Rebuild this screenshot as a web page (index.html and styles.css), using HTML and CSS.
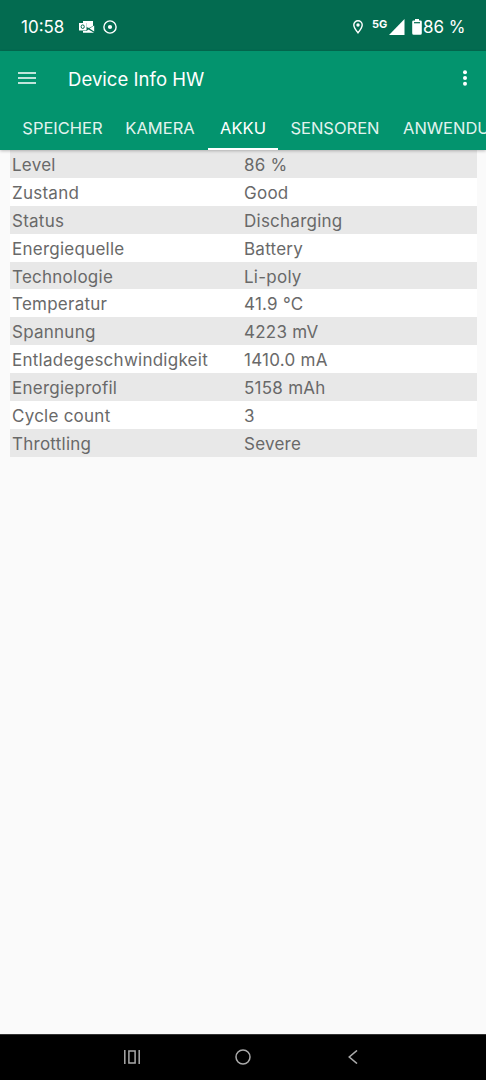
FILE: index.html
```
<!DOCTYPE html>
<html lang="de">
<head>
  <meta charset="UTF-8">
  <meta name="viewport" content="width=device-width, initial-scale=1.0">
  <title>Device Info HW</title>
  <link rel="stylesheet" href="styles.css">
</head>
<body>
  <div class="status-bar">
    <span class="clock">10:58</span>
    <svg class="icon-mail" width="16" height="14" viewBox="0 0 16 14">
      <path d="M4 1h10v5l-4 2-2.500-1V3H4z" fill="#fff"/>
      <path d="M15.200 5.500v6L10.500 8.500z" fill="#fff"/>
      <path d="M4 11h3.500l2-1.500 5.500 3.300H4z" fill="#fff"/>
      <rect x="0" y="3" width="7.500" height="7.500" fill="#fff"/>
      <ellipse cx="3.700" cy="6.700" rx="1.600" ry="1.800" fill="none" stroke="#036b50" stroke-width="1"/>
    </svg>
    <svg class="icon-target" width="14" height="14" viewBox="0 0 14 14">
      <circle cx="7" cy="7" r="6.100" fill="none" stroke="#fff" stroke-width="1.400"/>
      <circle cx="7" cy="7" r="2.100" fill="#fff"/>
    </svg>
    <svg class="icon-pin" width="10" height="14" viewBox="0 0 10 14">
      <path d="M5 12.800C3 10.200.8 7.400.8 4.900a4.200 4.200 0 0 1 8.400 0C9.200 7.400 7 10.200 5 12.800z" fill="none" stroke="#fff" stroke-width="1.400"/>
      <circle cx="5" cy="5" r="1.700" fill="#fff"/>
    </svg>
    <span class="network">5G</span>
    <svg class="icon-signal" width="16" height="16" viewBox="0 0 16 16"><path d="M0 16L15.500 0v16z" fill="#fff"/></svg>
    <svg class="icon-battery" width="10" height="16" viewBox="0 0 10 16">
      <path d="M3 0h4v1.500h1.500a1.300 1.300 0 0 1 1.300 1.300v11.500a1.500 1.500 0 0 1-1.500 1.500H1.700a1.500 1.500 0 0 1-1.500-1.500V2.800a1.300 1.300 0 0 1 1.300-1.300H3z" fill="#fff"/>
      <path d="M2 3.700h6" stroke="#036b50" stroke-width="1.200"/>
    </svg>
    <span class="percent">86 %</span>
  </div>

  <header class="app-header">
    <div class="toolbar">
      <svg class="menu" width="18" height="14" viewBox="0 0 18 14"><path d="M0 2h18M0 7h18M0 12h18" stroke="#fff" stroke-width="1.700"/></svg>
      <h1>Device Info HW</h1>
      <svg class="more" width="6" height="18" viewBox="0 0 6 18">
        <circle cx="3" cy="3.200" r="2" fill="#fff"/>
        <circle cx="3" cy="9" r="2" fill="#fff"/>
        <circle cx="3" cy="14.800" r="2" fill="#fff"/>
      </svg>
    </div>
    <nav class="tabs">
      <a class="tab tab-storage">SPEICHER</a>
      <a class="tab tab-camera">KAMERA</a>
      <a class="tab tab-battery active">AKKU</a>
      <a class="tab tab-sensors">SENSOREN</a>
      <a class="tab tab-apps">ANWENDUNGEN</a>
    </nav>
  </header>

  <main class="content">
    <dl class="info">
      <div class="row"><dt>Level</dt><dd>86 %</dd></div>
      <div class="row"><dt>Zustand</dt><dd>Good</dd></div>
      <div class="row"><dt>Status</dt><dd>Discharging</dd></div>
      <div class="row"><dt>Energiequelle</dt><dd>Battery</dd></div>
      <div class="row"><dt>Technologie</dt><dd>Li-poly</dd></div>
      <div class="row"><dt>Temperatur</dt><dd>41.9 °C</dd></div>
      <div class="row"><dt>Spannung</dt><dd>4223 mV</dd></div>
      <div class="row"><dt>Entladegeschwindigkeit</dt><dd>1410.0 mA</dd></div>
      <div class="row"><dt>Energieprofil</dt><dd>5158 mAh</dd></div>
      <div class="row"><dt>Cycle count</dt><dd>3</dd></div>
      <div class="row"><dt>Throttling</dt><dd>Severe</dd></div>
    </dl>
  </main>

  <footer class="nav-bar">
    <svg width="16" height="14" viewBox="0 0 16 14"><path d="M.8 0v14M15.200 0v14M4.900 1h6.200v12H4.900z" fill="none" stroke="#aaa" stroke-width="1.500"/></svg>
    <svg width="16" height="16" viewBox="0 0 16 16"><circle cx="8" cy="8" r="7" fill="none" stroke="#aaa" stroke-width="1.500"/></svg>
    <svg class="back" width="10" height="14" viewBox="0 0 10 14"><path d="M9 .5L1.300 7 9 13.500" fill="none" stroke="#aaa" stroke-width="1.600"/></svg>
  </footer>
</body>
</html>
```

FILE: styles.css
```
* {
  box-sizing: border-box;
}

body {
  margin: 0;
  height: 1080px;
  display: flex;
  flex-direction: column;
  overflow: hidden;
  font-family: Inter, "Open Sans", sans-serif;
  background: #fafafa;
  color: #696969;
}

svg {
  display: block;
  flex-shrink: 0;
}

.status-bar {
  height: 51px;
  flex-shrink: 0;
  display: flex;
  align-items: center;
  padding: 3px 22px 0 21px;
  background: #036b50;
  color: white;
}

.clock {
  width: 58px;
  font-size: 17px;
}

.icon-target {
  margin-left: 8px;
}

.icon-pin {
  margin-left: auto;
}

.network {
  margin: -7px 2px 0 9px;
  font-size: 11px;
  font-weight: 700;
  width: 15px;
}

.icon-battery {
  margin-left: 7px;
}

.percent {
  width: 41px;
  margin-left: 1px;
  font-size: 17px;
  white-space: nowrap;
}

.app-header {
  position: relative;
  z-index: 1;
  height: 99px;
  flex-shrink: 0;
  background: #03946e;
  color: white;
  box-shadow: 0 1px 3px rgba(0, 0, 0, 0.25);
}

.toolbar {
  height: 55px;
  display: flex;
  align-items: center;
  padding: 0 18px;
}

.menu,
.more {
  margin-top: -2px;
}

h1 {
  margin: 0 auto 0 32px;
  font-size: 18.500px;
  font-weight: 400;
  letter-spacing: 0.050px;
}

.tabs {
  height: 44px;
  display: flex;
  overflow: hidden;
}

.tab {
  flex-shrink: 0;
  padding-top: 12px;
  font-size: 16.500px;
  line-height: 20px;
  text-align: center;
  color: #e2f3ee;
  border-bottom: 2px solid transparent;
}

.tab-storage {
  width: 125px;
}

.tab-camera {
  width: 83px;
  padding-right: 13px;
}

.tab-battery {
  width: 70px;
}

.tab-sensors {
  width: 114px;
}

.tab-apps {
  padding-left: 11px;
}

.active {
  color: white;
  border-bottom-color: white;
}

.content {
  flex: 1;
  padding: 0 9.500px;
}

.info {
  margin: 0;
}

.row {
  display: grid;
  grid-template-columns: 232px 1fr;
  align-items: center;
  height: 27.900px;
  padding: 2px 2.500px 0;
  background: white;
  font-size: 17px;
  line-height: 24px;
  letter-spacing: 0.250px;
}

.row:nth-child(odd) {
  background: #e8e8e8;
}

dd {
  margin: 0;
}

.nav-bar {
  height: 46px;
  flex-shrink: 0;
  display: flex;
  align-items: center;
  gap: 95px;
  padding: 0 0 2px 124px;
  background: black;
  border-top: 1px solid #333;
}

.back {
  margin-left: 2px;
}
```
